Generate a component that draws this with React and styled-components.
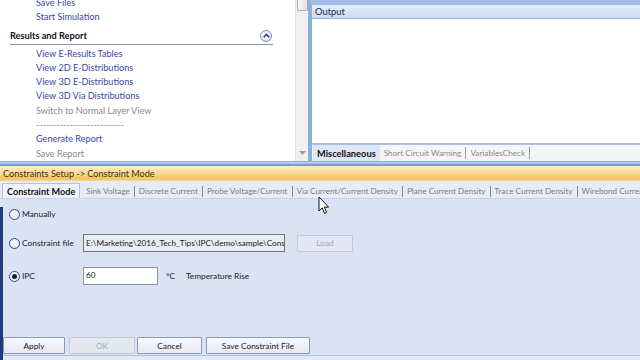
import React from "react";
import styled, { createGlobalStyle } from "styled-components";

const Global = createGlobalStyle`
  html, body { margin: 0; padding: 0; background: #fff; }
  body { font-family: Lato, "Liberation Sans", sans-serif; }
  * { box-sizing: border-box; }
`;

const Screen = styled.div`
  position: relative;
  width: 640px;
  height: 360px;
  overflow: hidden;
  display: flex;
  flex-direction: column;
  background: #dae3f4;
`;

const Top = styled.div`
  height: 161px;
  display: flex;
  flex-shrink: 0;
`;

const TaskPanel = styled.div`
  width: 296px;
  background: #fff;
  overflow: hidden;
  border-right: 1px solid #e4e4e4;
`;

const TaskList = styled.div`
  margin-top: -4px;
  display: flex;
  flex-direction: column;
`;

const Link = styled.div`
  height: 14.3px;
  line-height: 14.3px;
  padding-left: 36px;
  font-size: 9.1px;
  color: ${(p) => (p.$muted ? "#8a8a8a" : "#3848a8")};
  white-space: nowrap;
`;

const SectionHead = styled.div`
  display: flex;
  align-items: center;
  justify-content: space-between;
  height: 20px;
  margin: 0 22px 2px 10px;
  padding-top: 3px;
  border-bottom: 1.5px solid #8a94a6;
  font-size: 9.2px;
  font-weight: 700;
  color: #111;
`;

const Collapse = styled.span`
  width: 12px;
  height: 12px;
  margin-right: 1px;
  border-radius: 50%;
  border: 1px solid #7d8fb3;
  background: radial-gradient(circle at 50% 35%, #ffffff, #d3ddf0);
  display: flex;
  align-items: center;
  justify-content: center;
`;

const Scrollbar = styled.div`
  width: 12px;
  background: #f1f1f1;
  display: flex;
  flex-direction: column;
  justify-content: space-between;
  align-items: center;
  padding-bottom: 6px;
`;

const Thumb = styled.div`
  width: 11px;
  height: 11px;
  border: 1px solid #a8a8a8;
  border-top: none;
  border-radius: 0 0 2px 2px;
  background: linear-gradient(90deg, #f8f8f8, #e3e3e3);
`;

const OutputFrame = styled.div`
  flex: 1;
  display: flex;
  flex-direction: column;
  background: #fff;
  border-left: 4px solid #8eaedf;
  border-top: 5px solid #a2bce6;
`;

const OutputHeader = styled.div`
  height: 14px;
  background: linear-gradient(#e4edfa, #c9daf2);
  border-bottom: 1px solid #9cb6df;
  font-size: 9.4px;
  line-height: 13px;
  padding-left: 3px;
  color: #1b2a4a;
`;

const OutputBody = styled.div`
  flex: 1;
  background: #fff;
  border-bottom: 2px solid #a9c1e6;
`;

const TabStrip = styled.div`
  height: 16px;
  display: flex;
  align-items: stretch;
  background: #f4f5f7;
  padding-left: 1px;
`;

const Tab = styled.div`
  display: flex;
  align-items: center;
  padding: 0 4px;
  white-space: nowrap;
  font-size: ${(p) => (p.$active ? "9.3px" : "8.2px")};
  color: ${(p) => (p.$active ? "#111" : "#8a8a8a")};
  font-weight: ${(p) => (p.$active ? 700 : 400)};
  background: ${(p) => (p.$active ? "#dfe7f5" : "transparent")};
  border-right: ${(p) => (p.$active ? "none" : "1px solid #9a9a9a")};
  margin: ${(p) => (p.$active ? "0" : "2px 0")};
`;

const Splitter = styled.div`
  height: 5px;
  flex-shrink: 0;
  background: linear-gradient(#7d9bd0, #c9d8ef 35%, #86a5d8 65%, #6d8fc9);
`;

const TitleBar = styled.div`
  height: 15px;
  flex-shrink: 0;
  background: linear-gradient(#fdeec7, #fbdc98 45%, #f7c45e 80%, #fad48a);
  font-size: 9.1px;
  line-height: 15px;
  padding-left: 3px;
  color: #3a3220;
  white-space: nowrap;
`;

const ModeTabs = styled.div`
  height: 18px;
  flex-shrink: 0;
  display: flex;
  align-items: stretch;
  padding: 3px 0 0 2px;
  background: #e6ecf7;
  border-bottom: 1px solid #c6d3ea;
`;

const ModeTab = styled.div`
  display: flex;
  align-items: center;
  white-space: nowrap;
  padding: 0 4px;
  font-size: ${(p) => (p.$active ? "9.1px" : "8.15px")};
  color: ${(p) => (p.$active ? "#111" : "#7c7c7c")};
  font-weight: ${(p) => (p.$active ? 700 : 400)};
  background: ${(p) => (p.$active ? "#eef3fb" : "transparent")};
  border: ${(p) => (p.$active ? "1px solid #b3c4e0" : "none")};
  border-bottom: none;
  border-right: ${(p) => (p.$active ? "1px solid #b3c4e0" : "1px solid #888")};
  height: ${(p) => (p.$active ? "15px" : "11px")};
  align-self: ${(p) => (p.$active ? "flex-end" : "center")};
  margin-right: ${(p) => (p.$active ? "2px" : "0")};
`;

const Content = styled.div`
  flex: 1;
  display: flex;
  background: #dae3f4;
`;

const EdgeStrip = styled.div`
  width: 3px;
  margin-top: 8px;
  background: #1f3e78;
`;

const Form = styled.div`
  flex: 1;
  display: flex;
  flex-direction: column;
  padding: 6px 0 0 6px;
`;

const Row = styled.div`
  display: flex;
  align-items: center;
  height: 18px;
  margin-bottom: ${(p) => p.$mb || 0}px;
`;

const RadioLabel = styled.label`
  display: flex;
  align-items: center;
  width: 74px;
  font-size: 8.4px;
  color: #1a1a2a;
  gap: 2px;
  white-space: nowrap;
`;

const RadioDot = styled.span`
  width: 11px;
  height: 11px;
  border-radius: 50%;
  border: 1px solid #2c4a86;
  background: radial-gradient(circle at 40% 35%, #ffffff, #dfe6f2);
  display: flex;
  align-items: center;
  justify-content: center;
  &::after {
    content: "";
    width: 5px;
    height: 5px;
    border-radius: 50%;
    background: ${(p) => (p.$checked ? "#1a1a3a" : "transparent")};
  }
`;

const TextBox = styled.div`
  width: ${(p) => p.$w}px;
  height: 18px;
  flex-shrink: 0;
  border: 1px solid ${(p) => (p.$readonly ? "#6f7580" : "#8a94a6")};
  background: ${(p) => (p.$readonly ? "#e9edf4" : "#fff")};
  font-size: 8.2px;
  color: #222;
  padding: ${(p) => (p.$top ? "2px 2px" : "0 2px")};
  line-height: ${(p) => (p.$top ? "10px" : "16px")};
  white-space: nowrap;
  overflow: hidden;
  text-overflow: clip;
`;

const Button = styled.div`
  width: ${(p) => p.$w}px;
  height: 17px;
  flex-shrink: 0;
  display: flex;
  align-items: center;
  justify-content: center;
  margin-left: ${(p) => p.$ml || 0}px;
  font-size: 8.3px;
  color: ${(p) => (p.$disabled ? "#a2a8b2" : "#1a1a2a")};
  border: 1px solid ${(p) => (p.$disabled ? "#c3cad6" : "#8d9bb3")};
  background: ${(p) =>
    p.$disabled ? "#e3e8f1" : "linear-gradient(#f7f9fc, #e4e9f2)"};
  border-radius: 1px;
`;

const Unit = styled.span`
  font-size: 8.3px;
  color: #1a1a2a;
  margin-left: ${(p) => p.$ml}px;
`;

const Spacer = styled.div`
  flex: 1;
`;

const ButtonRow = styled.div`
  display: flex;
  margin-left: -6px;
`;

const Footer = styled.div`
  height: 5px;
  margin-top: 1px;
  margin-left: -6px;
  border-top: 1px solid #b4c3dc;
  background: #e3e9f4;
`;

const Cursor = styled.svg`
  position: absolute;
  left: 318px;
  top: 196px;
`;

const links = [
  { t: "View E-Results Tables" },
  { t: "View 2D E-Distributions" },
  { t: "View 3D E-Distributions" },
  { t: "View 3D Via Distributions" },
  { t: "Switch to Normal Layer View", muted: true },
  { t: "--------------------------", muted: true },
  { t: "Generate Report" },
  { t: "Save Report", muted: true },
];

const modeTabs = [
  "Constraint Mode",
  "Sink Voltage",
  "Discrete Current",
  "Probe Voltage/Current",
  "Via Current/Current Density",
  "Plane Current Density",
  "Trace Current Density",
  "Wirebond Current Density",
];

export default function App() {
  return (
    <>
      <Global />
      <Screen>
        <Top>
          <TaskPanel>
            <TaskList>
              <Link>Save Files</Link>
              <Link>Start Simulation</Link>
              <SectionHead>
                <span>Results and Report</span>
                <Collapse>
                  <svg width="7" height="5" viewBox="0 0 7 5">
                    <path d="M0.8 4.2 L3.5 1.3 L6.2 4.2" fill="none" stroke="#1f3c7a" strokeWidth="1.6" />
                  </svg>
                </Collapse>
              </SectionHead>
              {links.map((l, i) => (
                <Link key={i} $muted={l.muted}>
                  {l.t}
                </Link>
              ))}
            </TaskList>
          </TaskPanel>
          <Scrollbar>
            <Thumb />
            <svg width="7" height="4" viewBox="0 0 7 4">
              <path d="M0 0 L7 0 L3.5 4 Z" fill="#a0a0a0" />
            </svg>
          </Scrollbar>
          <OutputFrame>
            <OutputHeader>Output</OutputHeader>
            <OutputBody />
            <TabStrip>
              <Tab $active>Miscellaneous</Tab>
              <Tab>Short Circuit Warning</Tab>
              <Tab>VariablesCheck</Tab>
            </TabStrip>
          </OutputFrame>
        </Top>
        <Splitter />
        <TitleBar>Constraints Setup -&gt; Constraint Mode</TitleBar>
        <ModeTabs>
          {modeTabs.map((t, i) => (
            <ModeTab key={t} $active={i === 0}>
              {t}
            </ModeTab>
          ))}
        </ModeTabs>
        <Content>
          <EdgeStrip />
          <Form>
            <Row $mb={11}>
              <RadioLabel>
                <RadioDot />
                Manually
              </RadioLabel>
            </Row>
            <Row $mb={15}>
              <RadioLabel>
                <RadioDot />
                Constraint file
              </RadioLabel>
              <TextBox $w={202} $readonly>
                E:\Marketing\2016_Tech_Tips\IPC\demo\sample\Const
              </TextBox>
              <Button $w={56} $ml={12} $disabled>
                Load
              </Button>
            </Row>
            <Row>
              <RadioLabel>
                <RadioDot $checked />
                IPC
              </RadioLabel>
              <TextBox $w={75} $top>
                60
              </TextBox>
              <Unit $ml={8}>°C</Unit>
              <Unit $ml={11}>Temperature Rise</Unit>
            </Row>
            <Spacer />
            <ButtonRow>
              <Button $w={62}>Apply</Button>
              <Button $w={66} $ml={4} $disabled>
                OK
              </Button>
              <Button $w={65} $ml={2}>Cancel</Button>
              <Button $w={104} $ml={4}>Save Constraint File</Button>
            </ButtonRow>
            <Footer />
          </Form>
        </Content>
        <Cursor width="12" height="19" viewBox="0 0 12 19">
          <path
            d="M1 1 L1 15 L4.2 11.9 L6.6 17.4 L8.6 16.5 L6.3 11.1 L10.6 11.1 Z"
            fill="#fff"
            stroke="#111"
            strokeWidth="1"
            strokeLinejoin="round"
          />
        </Cursor>
      </Screen>
    </>
  );
}
